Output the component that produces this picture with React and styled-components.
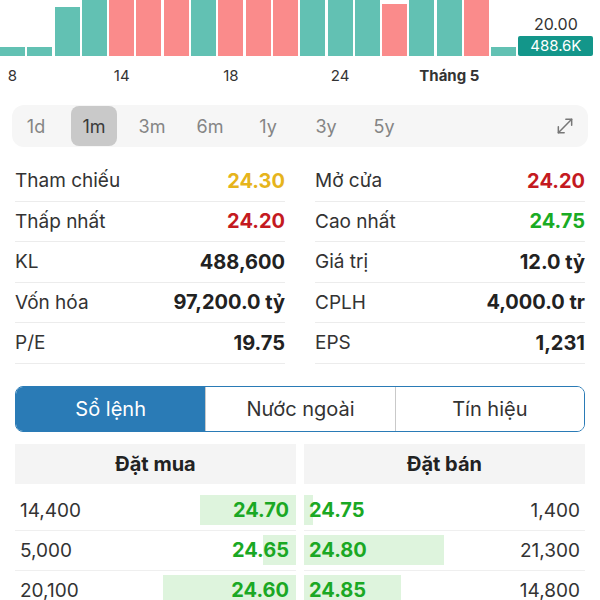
import React from "react";
import styled, { createGlobalStyle } from "styled-components";

const GlobalStyle = createGlobalStyle`
  body {
    margin: 0;
    background: #fff;
    font-family: "Inter", "Liberation Sans", sans-serif;
    color: #222;
  }
`;

const TEAL = "#62c1b3";
const PINK = "#fa8b8b";
const STEP = 27.3;

const bars = [
  ["t", 9], ["t", 9], ["t", 49], ["t", 58], ["p", 58], ["p", 58], ["p", 58],
  ["t", 58], ["p", 58], ["p", 58], ["p", 58], ["t", 58], ["t", 58], ["t", 58],
  ["p", 52], ["t", 58], ["t", 58], ["p", 58], ["t", 9],
];

const ticks = [
  { i: 0, label: "8" },
  { i: 4, label: "14" },
  { i: 8, label: "18" },
  { i: 12, label: "24" },
  { i: 16, label: "Tháng 5", bold: true },
];

const ranges = ["1d", "1m", "3m", "6m", "1y", "3y", "5y"];

const stats = [
  [
    { label: "Tham chiếu", value: "24.30", color: "#e6b41c" },
    { label: "Mở cửa", value: "24.20", color: "#c41a1f" },
  ],
  [
    { label: "Thấp nhất", value: "24.20", color: "#c41a1f" },
    { label: "Cao nhất", value: "24.75", color: "#1aab24" },
  ],
  [
    { label: "KL", value: "488,600" },
    { label: "Giá trị", value: "12.0 tỷ" },
  ],
  [
    { label: "Vốn hóa", value: "97,200.0 tỷ" },
    { label: "CPLH", value: "4,000.0 tr" },
  ],
  [
    { label: "P/E", value: "19.75" },
    { label: "EPS", value: "1,231" },
  ],
];

const buys = [
  { qty: "14,400", price: "24.70", bar: 96 },
  { qty: "5,000", price: "24.65", bar: 33 },
  { qty: "20,100", price: "24.60", bar: 133 },
];

const sells = [
  { qty: "1,400", price: "24.75", bar: 9 },
  { qty: "21,300", price: "24.80", bar: 140 },
  { qty: "14,800", price: "24.85", bar: 97 },
];

const Page = styled.div`
  width: 600px;
  height: 600px;
  overflow: hidden;
`;

const Chart = styled.div`
  display: flex;
  align-items: flex-end;
  height: 56px;
  overflow: hidden;
`;

const Bars = styled.div`
  display: flex;
  align-items: flex-end;
  gap: 2.3px;
  height: 100%;
`;

const Bar = styled.div`
  width: 25px;
  flex: none;
  height: ${(p) => p.$h}px;
  background: ${(p) => (p.$kind === "t" ? TEAL : PINK)};
`;

const PriceTag = styled.div`
  display: flex;
  flex-direction: column;
  align-items: center;
  margin-left: 2px;
`;

const TagPrice = styled.div`
  font-size: 16px;
  color: #333;
  line-height: 18px;
  margin-bottom: 3px;
`;

const TagVolume = styled.div`
  width: 75px;
  height: 20px;
  border-radius: 2px;
  background: #13968a;
  color: #fff;
  font-size: 15px;
  line-height: 20px;
  text-align: center;
`;

const Axis = styled.div`
  position: relative;
  height: 38px;
`;

const Tick = styled.span`
  position: absolute;
  top: 10px;
  transform: translateX(-50%);
  font-size: 15px;
  color: #333;
  font-weight: ${(p) => (p.$bold ? 700 : 400)};
  white-space: nowrap;
`;

const RangeBar = styled.div`
  display: flex;
  align-items: center;
  margin: 11px 12px 0;
  height: 42px;
  padding: 0 1px;
  border-radius: 12px;
  background: #f6f6f6;
  gap: 12px;
`;

const RangeItem = styled.div`
  width: 46px;
  height: 40px;
  border-radius: 8px;
  display: flex;
  align-items: center;
  justify-content: center;
  font-size: 18px;
  color: ${(p) => (p.$active ? "#3a3a3a" : "#858585")};
  background: ${(p) => (p.$active ? "#c9c9c9" : "transparent")};
`;

const ExpandButton = styled.div`
  margin-left: auto;
  margin-right: 12px;
  display: flex;
  color: #777;
`;

const Stats = styled.div`
  display: grid;
  grid-template-columns: 1fr 1fr;
  column-gap: 30px;
  padding: 14px 15px 0;
`;

const StatRow = styled.div`
  display: flex;
  justify-content: space-between;
  align-items: center;
  height: 39.5px;
  border-bottom: 1px solid #ececec;
  font-size: 19px;
`;

const StatLabel = styled.span`
  color: #333;
`;

const StatValue = styled.span`
  font-size: 20px;
  font-weight: 700;
  color: ${(p) => p.$color || "#222"};
`;

const Segmented = styled.div`
  display: grid;
  grid-template-columns: repeat(3, 1fr);
  margin: 22px 15px 0;
  height: 44px;
  border: 1.5px solid #2a7bb6;
  border-radius: 8px;
  overflow: hidden;
`;

const Segment = styled.div`
  display: flex;
  align-items: center;
  justify-content: center;
  font-size: 20px;
  color: ${(p) => (p.$active ? "#fff" : "#333")};
  background: ${(p) => (p.$active ? "#2a7bb6" : "#fff")};
  border-left: ${(p) => (p.$first ? "none" : "1px solid #c9c9c9")};
`;

const OrderBook = styled.div`
  display: grid;
  grid-template-columns: 1fr 1fr;
  column-gap: 8px;
  margin: 12px 15px 0;
`;

const Side = styled.div`
  display: flex;
  flex-direction: column;
`;

const SideHeader = styled.div`
  height: 40px;
  background: #f4f4f4;
  display: flex;
  align-items: center;
  justify-content: center;
  font-size: 20px;
  font-weight: 700;
  color: #222;
  margin-bottom: 7px;
`;

const OrderRow = styled.div`
  display: flex;
  flex-direction: ${(p) => (p.$sell ? "row-reverse" : "row")};
  justify-content: space-between;
  align-items: center;
  height: 39px;
  border-bottom: 1px solid #efefef;
  padding: ${(p) => (p.$sell ? "0 5px 0 5px" : "0 7px 0 5px")};
  font-size: 19px;
  background-image: linear-gradient(#def4dd, #def4dd);
  background-repeat: no-repeat;
  background-size: ${(p) => p.$bar}px 30px;
  background-position: ${(p) => (p.$sell ? "left center" : "right center")};
`;

const Qty = styled.span`
  color: #333;
`;

const Price = styled.span`
  font-size: 20px;
  font-weight: 700;
  color: #1aa824;
`;

function ExpandIcon() {
  return (
    <svg width="20" height="20" viewBox="0 0 24 24" fill="none" stroke="currentColor" strokeWidth="1.8" strokeLinecap="round" strokeLinejoin="round">
      <polyline points="13 4 20 4 20 11" />
      <polyline points="11 20 4 20 4 13" />
      <line x1="20" y1="4" x2="4" y2="20" />
    </svg>
  );
}

export default function App() {
  return (
    <Page>
      <GlobalStyle />
      <Chart>
        <Bars>
          {bars.map(([kind, h], i) => (
            <Bar key={i} $kind={kind} $h={h} />
          ))}
        </Bars>
        <PriceTag>
          <TagPrice>20.00</TagPrice>
          <TagVolume>488.6K</TagVolume>
        </PriceTag>
      </Chart>
      <Axis>
        {ticks.map((t) => (
          <Tick key={t.label} $bold={t.bold} style={{ left: t.i * STEP + 12.5 }}>
            {t.label}
          </Tick>
        ))}
      </Axis>
      <RangeBar>
        {ranges.map((r) => (
          <RangeItem key={r} $active={r === "1m"}>
            {r}
          </RangeItem>
        ))}
        <ExpandButton>
          <ExpandIcon />
        </ExpandButton>
      </RangeBar>
      <Stats>
        {stats.map((pair, i) =>
          pair.map((s) => (
            <StatRow key={s.label + i}>
              <StatLabel>{s.label}</StatLabel>
              <StatValue $color={s.color}>{s.value}</StatValue>
            </StatRow>
          ))
        )}
      </Stats>
      <Segmented>
        <Segment $active $first>Sổ lệnh</Segment>
        <Segment>Nước ngoài</Segment>
        <Segment>Tín hiệu</Segment>
      </Segmented>
      <OrderBook>
        <Side>
          <SideHeader>Đặt mua</SideHeader>
          {buys.map((o) => (
            <OrderRow key={o.price} $bar={o.bar}>
              <Qty>{o.qty}</Qty>
              <Price>{o.price}</Price>
            </OrderRow>
          ))}
        </Side>
        <Side>
          <SideHeader>Đặt bán</SideHeader>
          {sells.map((o) => (
            <OrderRow key={o.price} $bar={o.bar} $sell>
              <Qty>{o.qty}</Qty>
              <Price>{o.price}</Price>
            </OrderRow>
          ))}
        </Side>
      </OrderBook>
    </Page>
  );
}
